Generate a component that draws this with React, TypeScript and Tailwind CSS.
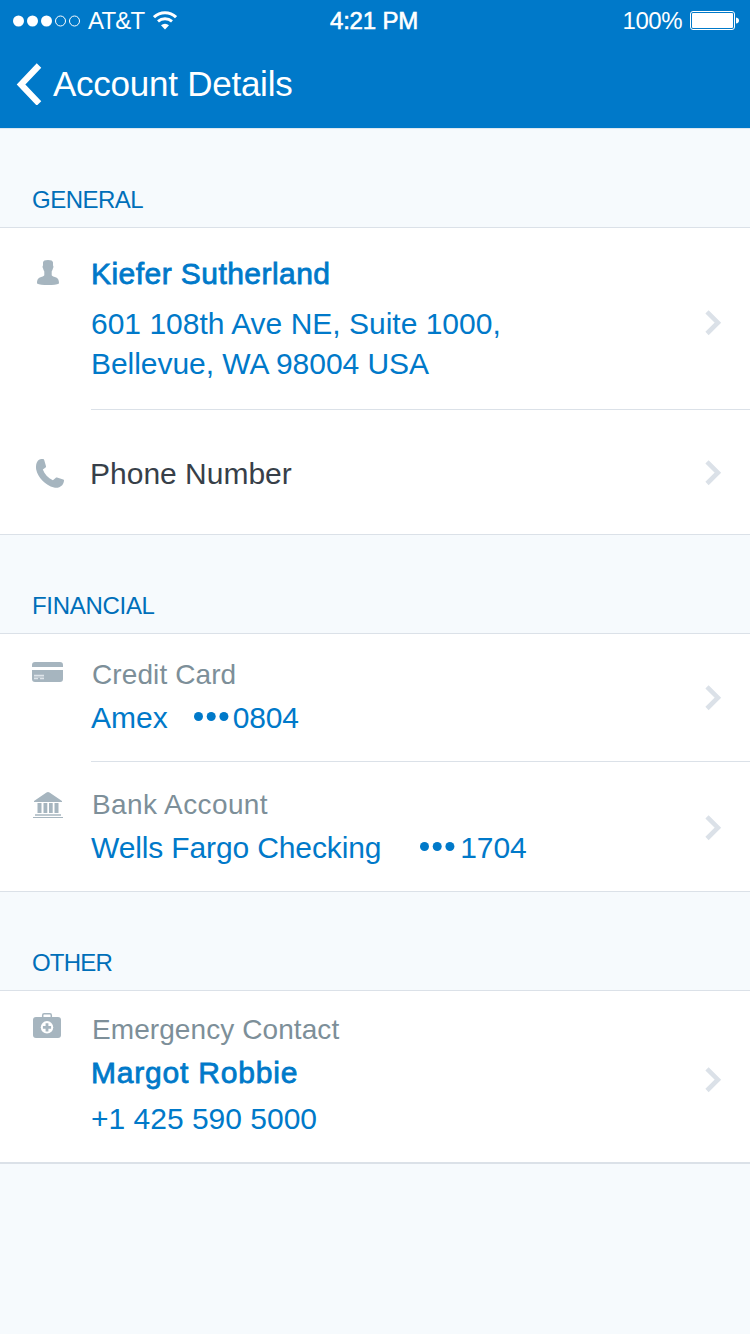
import type { ReactNode } from "react";

const strong = "[-webkit-text-stroke:0.8px_#0079c9]";

function Chevron({ className }: { className: string }) {
  return (
    <svg className={`mr-[27px] h-[26px] w-[18px] shrink-0 ${className}`} viewBox="0 0 18 26" fill="none">
      <path d="M2 1.900 12.900 12.700 2 23.500" stroke="#dbe1e8" strokeWidth="4.600" />
    </svg>
  );
}

function PersonIcon() {
  return (
    <svg className="mt-8 ml-[37px] h-[25px] w-[22px]" viewBox="0 0 22 25" fill="#a6b5bf">
      <path d="M11 0C14 0 15.900 .8 16 2.600V5.500C16.600 5.800 16.600 7.800 15.900 8.600 15.500 10 15.200 10.800 14.700 11.500V15.200C14.900 16 16.500 16.500 18 17 20.800 18 22 19.500 22 23.400 20 24.500 16 25 11 25S2 24.500 0 23.400C0 19.500 1.200 18 4 17 5.500 16.500 7.100 16 7.300 15.200V11.500C6.800 10.800 6.500 10 6.100 8.600 5.400 7.800 5.400 5.800 6 5.500V2.600C6.100 .8 8 0 11 0Z" />
    </svg>
  );
}

function PhoneIcon() {
  return (
    <svg className="mt-[49px] ml-9 h-[29px] w-7" viewBox="0 0 28 29" fill="#a6b5bf">
      <path d="M3.500.6C4.500.1 5.800 0 7 0 7.700 0 8 .3 8.200.9L10 7.200C10.100 7.800 10 8.200 9.600 8.500L6.800 10.600C8.500 15.200 12 19 16.900 21.300L19.600 18.900C20 18.500 20.500 18.400 21 18.600L27.200 20.600C27.900 20.800 28.100 21.200 28 21.800 27.800 23.400 27.100 25.200 26.200 26.200 24 28.300 21 29.300 18 28.600 9 26.200 1.800 18.300.2 10.500-.5 6.500.4 2.200 3.500.6Z" />
    </svg>
  );
}

function CardIcon() {
  return (
    <svg className="mt-7 ml-8 h-5 w-[31px]" viewBox="0 0 31 20">
      <path d="M0 5V3Q0 0 3 0H28Q31 0 31 3V5ZM0 8H31V17Q31 20 28 20H3Q0 20 0 17Z" fill="#a6b5bf" />
      <path d="M2 13.500H12M2 16.500H6M8 16.500H12" stroke="#dde4e9" strokeWidth="1.300" />
      <path d="M2 15H12" stroke="#c4ced5" strokeWidth="1.500" />
    </svg>
  );
}

function BankIcon() {
  return (
    <svg className="mt-[30px] ml-[33px] h-[26px] w-[30px]" viewBox="0 0 30 26" fill="#a6b5bf">
      <path d="M1 9 13.500 .5Q15 -.3 16.500 .5L29 9V10H1ZM4.500 11H8.500V21H4.500ZM10.500 11H14.300V21H10.500ZM16 11H19.700V21H16ZM21.500 11H25.500V21H21.500ZM0 25H30V26H0Z" />
      <path d="M2 22H28V24H2Z" fill="#bdc8cf" />
    </svg>
  );
}

function MedkitIcon() {
  return (
    <svg className="mt-[22px] ml-[33px] h-[25px] w-7" viewBox="0 0 28 25">
      <path d="M9.700 4V2.200Q9.700.8 11.100.8H16.900Q18.300.8 18.300 2.200V4" fill="none" stroke="#a6b5bf" strokeWidth="1.500" />
      <rect y="4" width="28" height="21" rx="3" fill="#a6b5bf" />
      <circle cx="14" cy="14.300" r="6.200" fill="#fff" />
      <path d="M14 10.200V18.400M9.900 14.300H18.100" stroke="#a6b5bf" strokeWidth="2.800" />
    </svg>
  );
}

function SectionTitle({ className, children }: { className: string; children: ReactNode }) {
  return (
    <h2 className={`h-[99px] border-b border-[#dbe1e8] pt-14 pl-8 text-2xl leading-[30px] text-[#006fb9] ${className}`}>
      {children}
    </h2>
  );
}

function Row({ className, icon, chevron, divider = false, children }: { className: string; icon: ReactNode; chevron: string; divider?: boolean; children: ReactNode }) {
  return (
    <div className={`flex bg-white ${className}`}>
      <div className="w-[91px] shrink-0">{icon}</div>
      <div className={`flex flex-1 ${divider ? "border-b border-[#dbe1e8]" : ""}`}>
        <div className="flex-1 leading-10 whitespace-nowrap">{children}</div>
        <Chevron className={chevron} />
      </div>
    </div>
  );
}

function Dots({ className }: { className: string }) {
  return (
    <svg className={`mt-3.5 h-[9px] w-[35px] ${className}`} viewBox="0 0 35 9" fill="#0079c9">
      <circle cx="4.500" cy="4.500" r="4.500" />
      <circle cx="17.200" cy="4.500" r="4.500" />
      <circle cx="29.900" cy="4.500" r="4.500" />
    </svg>
  );
}

export default function App() {
  return (
    <div className="min-h-[1334px] w-[750px] bg-[#f6fafd] font-['Liberation_Sans',Arial,sans-serif] text-[30px] text-[#0079c9]">
      <header className="h-[129px] border-b border-[#dbe8f1] bg-[#0079c9] text-white">
        <div className="grid h-[41px] grid-cols-3 items-center text-2xl">
          <div className="flex items-center pl-[13px]">
            <svg className="h-3 w-[67px]" viewBox="0 0 67 12" fill="#fff">
              <circle cx="5.500" cy="6" r="5.500" />
              <circle cx="19.500" cy="6" r="5.500" />
              <circle cx="33.500" cy="6" r="5.500" />
              <circle cx="47.500" cy="6" r="5" fill="none" stroke="#fff" />
              <circle cx="61.500" cy="6" r="5" fill="none" stroke="#fff" />
            </svg>
            <span className="ml-2 pt-px leading-10 tracking-[-0.8px]">AT&amp;T</span>
            <svg className="mb-px ml-[9px] h-[19px] w-6" viewBox="0 0 24 19" fill="none" stroke="#fff">
              <path d="M1 6.200a16 16 0 0 1 22 0" strokeWidth="3" />
              <path d="M5 10.400a10.500 10.500 0 0 1 14 0" strokeWidth="2.800" />
              <path d="M12 18.500 8 14.300a6 6 0 0 1 8 0Z" fill="#fff" stroke="none" />
            </svg>
          </div>
          <div className="pt-px pr-0.5 text-center leading-10 tracking-[-0.2px] [-webkit-text-stroke:0.6px_#fff]">4:21 PM</div>
          <div className="flex items-center justify-end pr-[11px]">
            <span className="pt-px leading-10 tracking-[-0.5px]">100%</span>
            <svg className="ml-2 h-[19px] w-[49px]" viewBox="0 0 49 19">
              <rect x=".5" y=".5" width="44" height="18" rx="2.500" fill="none" stroke="#fff" />
              <rect x="2" y="2" width="41" height="15" rx="1" fill="#fff" />
              <path d="M46 6.500Q49 7 49 9.500T46 12.500Z" fill="#fff" />
            </svg>
          </div>
        </div>
        <div className="flex pl-4">
          <svg className="mt-[22px] h-[42px] w-[26px]" viewBox="0 0 26 42" fill="none" stroke="#fff" strokeWidth="6.200">
            <path d="M23 2.500 5 21.500 23 40.500" />
          </svg>
          <h1 className="mt-[23px] ml-[11px] text-[35px] leading-10 tracking-[-0.25px]">Account Details</h1>
        </div>
      </header>

      <SectionTitle className="tracking-[-0.5px]">GENERAL</SectionTitle>
      <Row className="h-[182px]" icon={<PersonIcon />} chevron="mt-[82px]" divider>
        <p className={`mt-[26px] tracking-[0.45px] ${strong}`}>Kiefer Sutherland</p>
        <p className="mt-2.5">601 108th Ave NE, Suite 1000,</p>
        <p className="tracking-[-0.05px]">Bellevue, WA 98004 USA</p>
      </Row>
      <Row className="h-[125px] border-b border-[#dbe1e8]" icon={<PhoneIcon />} chevron="mt-[50px]">
        <p className="mt-11 -ml-px text-[#373f49]">Phone Number</p>
      </Row>

      <SectionTitle className="tracking-[-0.3px]">FINANCIAL</SectionTitle>
      <Row className="h-32" icon={<CardIcon />} chevron="mt-[51px]" divider>
        <p className="mt-[21px] ml-px text-[28px] tracking-[0.1px] text-[#7d8f99]">Credit Card</p>
        <p className="mt-[3px] flex">
          Amex<Dots className="mr-1 ml-[26px]" /><span className="tracking-[-0.15px]">0804</span>
        </p>
      </Row>
      <Row className="h-[130px] border-b border-[#dbe1e8]" icon={<BankIcon />} chevron="mt-[53px]">
        <p className="mt-[23px] ml-px text-[28px] tracking-[0.4px] text-[#7d8f99]">Bank Account</p>
        <p className="mt-[3px] flex tracking-[-0.13px]">
          Wells Fargo Checking<Dots className="mr-[5px] ml-[39px]" />1704
        </p>
      </Row>

      <SectionTitle className="tracking-[-0.8px]">OTHER</SectionTitle>
      <Row className="h-[173px] border-b-2 border-[#dbe1e8]" icon={<MedkitIcon />} chevron="mt-[76px]">
        <p className="mt-[19px] ml-px text-[28px] tracking-[0.08px] text-[#7d8f99]">Emergency Contact</p>
        <p className={`mt-[3px] tracking-[0.8px] ${strong}`}>Margot Robbie</p>
        <p className="mt-1.5">+1 425 590 5000</p>
      </Row>
    </div>
  );
}
